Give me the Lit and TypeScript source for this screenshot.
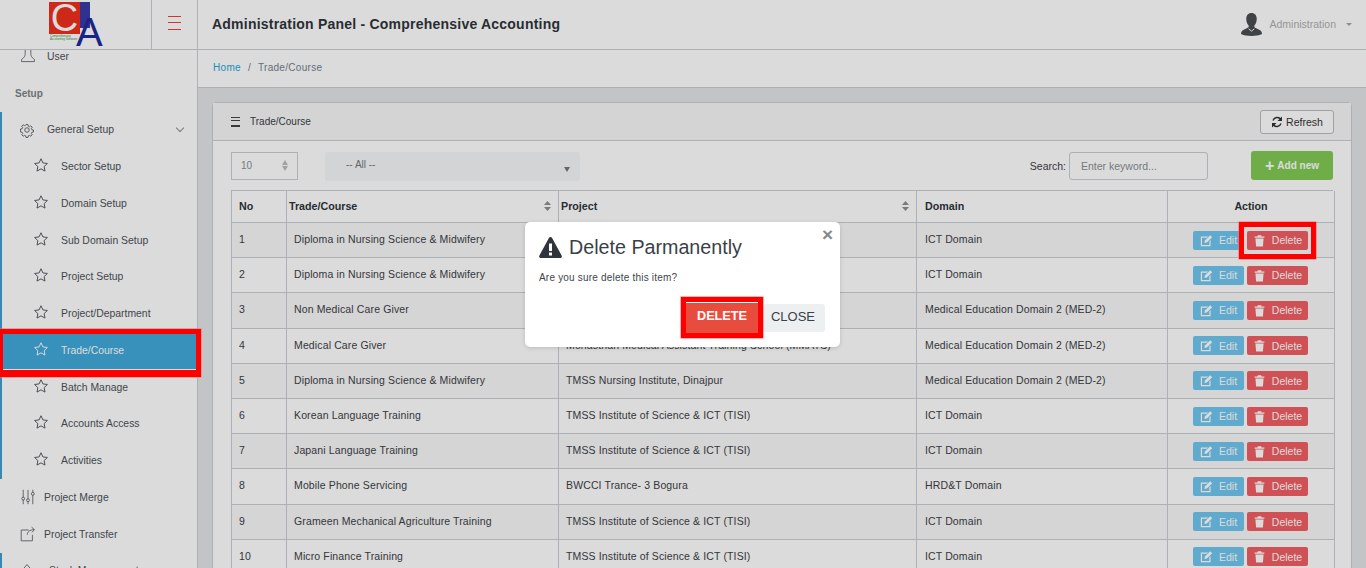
import { LitElement, html, css, svg } from 'lit';
import { customElement } from 'lit/decorators.js';

const star = svg`<path d="M10 2.200l2.400 5.200 5.600.7-4.100 3.900 1.100 5.600-5-2.800-5 2.800 1.100-5.600L2 8.100l5.600-.7z" fill="none" stroke="currentColor" stroke-width="1.200" stroke-linejoin="round"/>`;
const gear = svg`<circle cx="10" cy="10" r="2.800" fill="none" stroke="currentColor" stroke-width="1.100"/><path d="M8.600 2.500h2.800l.4 2.200 1.500.7 1.900-1.200 2 2-1.200 1.900.7 1.500 2.200.4v2.800l-2.200.4-.7 1.500 1.200 1.900-2 2-1.900-1.200-1.500.7-.4 2.200H8.600l-.4-2.200-1.500-.7-1.900 1.200-2-2 1.200-1.900-.7-1.500-2.200-.4V8.600l2.200-.4.7-1.500L2.600 4.800l2-2 1.900 1.200 1.500-.7z" fill="none" stroke="currentColor" stroke-width="1.200" stroke-linejoin="round" transform="translate(1 1) scale(.9)"/>`;
const user = svg`<path d="M6.500 2v4.500c0 2-.5 4-1.500 5L2 14.500V17h16v-2.500l-3-3c-1-1-1.500-3-1.500-5V2" fill="none" stroke="currentColor" stroke-width="1"/>`;
const sliders = svg`<path d="M4 1v18M10 1v18M16 1v18" stroke="currentColor" stroke-width="1"/><circle cx="4" cy="12" r="1.800" fill="#fff" stroke="currentColor"/><circle cx="10" cy="14" r="1.800" fill="#fff" stroke="currentColor"/><circle cx="16" cy="6" r="1.800" fill="#fff" stroke="currentColor"/>`;
const share = svg`<path d="M11 5H1.500v13.500h14V11M9 11c.5-4 3-6 8.500-6.500M14.500 1.500l3.500 3-3 3.500" fill="none" stroke="currentColor" stroke-width="1"/>`;
const house = svg`<path d="M10 2L3 10h3v6h8v-6h3z" fill="none" stroke="currentColor" stroke-width="1"/>`;
const editIcon = svg`<path d="M1 3h9L8.500 4.500H2.500v9h9V9L13 7.500V15H1z" fill="currentColor"/><path d="M6 8l6.500-6.500 2.500 2.500L8.500 10.500 5.500 11z" fill="currentColor"/>`;
const trashIcon = svg`<path d="M2 3h3.300l.7-1.500h4l.7 1.500H14v1.500H2zM3 5.500h10L12.200 15.500H3.800z" fill="currentColor"/>`;
const sortIcon = html`<svg width="7" height="10" viewBox="0 0 7 10"><path d="M3.500 0L7 4H0zM3.500 10L0 6h7z" fill="#8f8f8f"/></svg>`;

const ic = (p: unknown, size = 16, box = 20) => html`<svg width=${size} height=${size} viewBox="0 0 ${box} ${box}">${p}</svg>`;

const subs = ['Sector Setup', 'Domain Setup', 'Sub Domain Setup', 'Project Setup', 'Project/Department', 'Trade/Course', 'Batch Manage', 'Accounts Access', 'Activities'];

const rows = [
  ['Diploma in Nursing Science & Midwifery', 'TMSS Nursing Institute, Bogura', 'ICT Domain'],
  ['Diploma in Nursing Science & Midwifery', 'TMSS Nursing Institute, Rangpur', 'ICT Domain'],
  ['Non Medical Care Giver', 'Mohasthan Medical Assistant Training School', 'Medical Education Domain 2 (MED-2)'],
  ['Medical Care Giver', 'Mohasthan Medical Assistant Training School (MMATS)', 'Medical Education Domain 2 (MED-2)'],
  ['Diploma in Nursing Science & Midwifery', 'TMSS Nursing Institute, Dinajpur', 'Medical Education Domain 2 (MED-2)'],
  ['Korean Language Training', 'TMSS Institute of Science & ICT (TISI)', 'ICT Domain'],
  ['Japani Language Training', 'TMSS Institute of Science & ICT (TISI)', 'ICT Domain'],
  ['Mobile Phone Servicing', 'BWCCI Trance- 3 Bogura', 'HRD&T Domain'],
  ['Grameen Mechanical Agriculture Training', 'TMSS Institute of Science & ICT (TISI)', 'ICT Domain'],
  ['Micro Finance Training', 'TMSS Institute of Science & ICT (TISI)', 'ICT Domain'],
];

@customElement('app-root')
export class AppRoot extends LitElement {
  static styles = css`
    :host { display: block; height: 568px; overflow: hidden; position: relative; font-family: 'Liberation Sans', Arial, sans-serif; color: #3d4146; background: #e4e5e6; }
    * { box-sizing: border-box; }

    .top { height: 50px; display: flex; align-items: stretch; background: #fff; border-bottom: 1px solid #c8ced3; }
    .brand { width: 152px; border-right: 1px solid #c8ced3; position: relative; }
    .toggle { width: 46px; border-right: 1px solid #c8ced3; display: flex; align-items: center; justify-content: center; }
    .toggle span { display: block; width: 13px; border-top: 1px solid #f0402f; border-bottom: 1px solid #f0402f; height: 14px; position: relative; margin-top: -3px; }
    .toggle span::after { content: ''; position: absolute; left: 0; right: 0; top: 5px; border-top: 1px solid #f0402f; }
    .title { flex: 1; padding-left: 14px; font-size: 14px; font-weight: bold; letter-spacing: 0.22px; line-height: 48px; color: #2f353a; }
    .account { display: flex; align-items: center; padding-right: 14px; font-size: 10.500px; color: #b0b0b0; gap: 7px; }
    .account .name { margin-top: -2px; }
    .caret { border: 3px solid transparent; border-top: 3px solid #a8a8a8; margin: 3px 0 0 3px; }

    .logo-c { position: absolute; left: 49px; top: 2px; width: 31px; height: 32px; background: #f0301c; color: #fff; font-size: 38px; line-height: 33px; text-align: center; }
    .logo-b { position: absolute; left: 80px; top: 2px; width: 10px; height: 26px; background: #3a3aa8; }
    .logo-a { position: absolute; left: 76px; top: 14px; font-size: 40px; line-height: 36px; color: #1d2a9c; }
    .logo-t { position: absolute; left: 50px; top: 35px; font-size: 3px; line-height: 3px; color: #2a9a3a; }

    .main { display: flex; height: 518px; }
    .side { width: 198px; flex: none; background: #fff; overflow: hidden; border-right: 1px solid #c8ced3; font-size: 10.400px; color: #4d5258; }
    .menu { margin-top: -12px; }
    .item { height: 36.750px; display: flex; align-items: center; padding-left: 20px; gap: 11px; }
    .item svg { flex: none; color: #51565c; }
    .label { height: 36.800px; display: flex; align-items: center; padding-left: 15px; font-weight: bold; color: #7d8388; font-size: 10px; }
    .group { border-left: 2px solid #3e9fd0; }
    .group > .item { padding-left: 17px; gap: 12px; }
    .group > .sub { padding-left: 31px; gap: 12px; }
    .sub svg { margin-top: -3px; }
    .sub.active { background: #40a9d9; color: #fff; }
    .sub.active svg { color: #fff; }
    .chev { margin-left: auto; margin-right: 14px; width: 6px; height: 6px; border-right: 1px solid #8a8f93; border-bottom: 1px solid #8a8f93; transform: rotate(45deg); margin-top: -3px; }

    .content { flex: 1; min-width: 0; }
    .crumb { height: 38px; background: #fff; border-bottom: 1px solid #c8ced3; padding-left: 15px; font-size: 10px; line-height: 36px; color: #73818f; letter-spacing: 0.3px; }
    .crumb a { color: #20a8d8; }
    .crumb i { font-style: normal; margin: 0 7px; }

    .card { margin: 14px 14px 0 14px; background: #fff; border: 1px solid #c8ced3; border-radius: 4px 4px 0 0; height: 500px; }
    .card-h { height: 38px; background: #f7f7f7; border-bottom: 1px solid #c8ced3; display: flex; align-items: center; padding: 0 17px 0 18px; font-size: 10px; gap: 10px; }
    .bars { width: 9px; height: 10px; border-top: 1px solid #444; border-bottom: 1px solid #444; position: relative; }
    .bars::after { content: ''; position: absolute; left: 0; right: 0; top: 2px; height: 4px; border-top: 1px solid #444; border-bottom: 1px solid #444; }
    .refresh { margin-left: auto; width: 74px; height: 24px; border: 1px solid #b8bcc0; border-radius: 3px; background: #fff; display: flex; align-items: center; justify-content: center; gap: 3px; font-size: 10.500px; color: #333; }

    .tools { display: flex; align-items: center; height: 49px; padding: 0 18px; }
    .len { width: 67px; height: 28px; border: 1px solid #c8ced3; font-size: 10px; color: #8a8f93; padding: 0 9px; display: flex; align-items: center; justify-content: space-between; }
    .updown { display: flex; flex-direction: column; gap: 1px; }
    .updown b { display: block; border: 3.500px solid transparent; }
    .updown b:first-child { border-top: 0; border-bottom: 5px solid #bdbdbd; }
    .updown b:last-child { border-bottom: 0; border-top: 5px solid #bdbdbd; }
    .pick { width: 255px; height: 29px; margin: 2px 0 0 27px; background: #f5f7f9; border-radius: 3px; font-size: 10px; color: #777; padding: 7px 21px; position: relative; }
    .pick::after { content: ''; position: absolute; right: 10px; top: 15px; border: 3.500px solid transparent; border-top: 5px solid #777; }
    .search { margin-left: auto; font-size: 10.500px; color: #3d4146; display: flex; align-items: center; gap: 3px; }
    .search span { width: 139px; height: 28px; background: #fff; border: 1px solid #c8ced3; border-radius: 3px; display: flex; align-items: center; padding-left: 11px; color: #8a8f93; font-size: 10.500px; }
    .add { margin-left: 43px; width: 82px; height: 29px; background: #82ca54; color: #fff; border-radius: 3px; display: flex; align-items: center; justify-content: center; font-size: 10px; font-weight: bold; gap: 3px; }
    .add b { font-size: 16px; line-height: 14px; }

    .tbl { margin: 0 18px; display: grid; grid-template-columns: 55px 272px 358px 251px 167px; border-left: 1px solid #c8ced3; border-top: 1px solid #c8ced3; font-size: 10.500px; letter-spacing: 0.13px; }
    .c { border-right: 1px solid #c8ced3; border-bottom: 1px solid #c8ced3; padding: 0 7px; height: 35.200px; line-height: 32px; white-space: nowrap; overflow: hidden; color: #3d4146; }
    .c.d { padding-left: 8px; }
    .c.h { height: 32px; line-height: 30px; font-weight: bold; color: #2f353a; font-size: 10.700px; letter-spacing: 0; display: flex; justify-content: space-between; align-items: center; padding-bottom: 2px; }
    .c.h.sort { padding: 0 7px 2px 2px; }
    .c.h.act { justify-content: center; }
    .c.odd { background: #f8f8f9; }
    .acts { display: flex; justify-content: flex-end; align-items: center; gap: 3px; height: 100%; padding-right: 26px; }
    .btn { height: 19px; border-radius: 2px; color: #fff; display: flex; align-items: center; justify-content: center; gap: 6px; font-size: 10.500px; letter-spacing: 0; }
    .btn.edit { width: 51px; background: #70c6f0; }
    .btn.del { width: 61px; background: #f25f65; }

    .backdrop { position: absolute; inset: 0; background: rgba(0,0,0,.14); }
    .modal { position: absolute; left: 525px; top: 222px; width: 315px; height: 125px; background: #fff; border-radius: 5px; box-shadow: 0 1px 4px rgba(0,0,0,.15); padding: 13px 15px 0 14px; }
    .m-title { display: flex; align-items: center; gap: 7px; font-size: 19.700px; line-height: 24px; color: #3a3f48; }
    .m-x { position: absolute; right: 7px; top: 5px; font-size: 19px; line-height: 16px; color: #888; font-weight: bold; }
    .m-body { font-size: 10px; margin-top: 13px; letter-spacing: 0.2px; color: #40454d; }
    .m-btns { display: flex; justify-content: flex-end; margin-top: 20px; gap: 5px; align-items: flex-start; }
    .m-del { width: 72px; height: 30px; background: #e84c3d; color: #fff; font-weight: bold; font-size: 12.700px; display: flex; align-items: center; justify-content: center; padding-bottom: 4px; }
    .m-close { width: 62px; height: 28px; margin-top: 1px; background: #ecf0f1; border-radius: 3px; font-size: 13px; color: #3a3f48; display: flex; align-items: center; justify-content: center; padding: 0 2px 4px 0; }

    .mark { position: absolute; border: 5px solid #ff0000; box-shadow: 0 0 0 0.500px #ff6666; }
    .mark.nav { border-bottom-width: 7px; }
  `;

  render() {
    return html`
      <div class="top">
        <div class="brand">
          <div class="logo-c">C</div><div class="logo-b"></div><div class="logo-a">A</div>
          <div class="logo-t">Comprehensive<br>Accounting Software</div>
        </div>
        <div class="toggle"><span></span></div>
        <div class="title">Administration Panel - Comprehensive Accounting</div>
        <div class="account">
          <svg width="21" height="23" viewBox="0 0 22 24"><path d="M11 0c3.500 0 5.500 2.500 5.500 6 0 3-1 5.500-2.500 7v2l6 3c1.500 1 2 2.500 2 4-3 1.500-7 2-11 2s-8-.5-11-2c0-1.500.5-3 2-4l6-3v-2C6.500 11.500 5.500 9 5.500 6 5.500 2.500 7.500 0 11 0z" fill="#4a4e52"/><path d="M8 16.500l3 2.500 3-2.500" fill="none" stroke="#fff" stroke-width="1"/></svg>
          <span class="name">Administration</span><span class="caret"></span>
        </div>
      </div>
      <div class="main">
        <div class="side">
          <div class="menu">
            <div class="item">${ic(user)}<span>User</span></div>
            <div class="label">Setup</div>
            <div class="group">
              <div class="item">${ic(gear)}<span>General Setup</span><span class="chev"></span></div>
              ${subs.map((s) => html`<div class="item sub ${s === 'Trade/Course' ? 'active' : ''}">${ic(star)}<span>${s}</span></div>`)}
            </div>
            <div class="item" style="gap:8px">${ic(sliders)}<span>Project Merge</span></div>
            <div class="item" style="gap:8px">${ic(share)}<span>Project Transfer</span></div>
            <div class="group"><div class="item" style="gap:14px">${ic(house)}<span>Stock Management</span></div></div>
          </div>
        </div>
        <div class="content">
          <div class="crumb"><a>Home</a><i>/</i>Trade/Course</div>
          <div class="card">
            <div class="card-h">
              <span class="bars"></span><span>Trade/Course</span>
              <span class="refresh">
                <svg width="12" height="12" viewBox="0 0 12 12"><path d="M10 3.500A4.500 4.500 0 0 0 2 4.500M2 8.500A4.500 4.500 0 0 0 10 7.500" fill="none" stroke="#333" stroke-width="1.400"/><path d="M11 .5V5H6.500zM1 11.500V7h4.500z" fill="#333"/></svg>
                Refresh
              </span>
            </div>
            <div class="tools">
              <div class="len"><span>10</span><span class="updown"><b></b><b></b></span></div>
              <div class="pick">-- All --</div>
              <div class="search">Search: <span>Enter keyword...</span></div>
              <div class="add"><b>+</b>Add new</div>
            </div>
            <div class="tbl">
              <div class="c h">No</div>
              <div class="c h sort"><span>Trade/Course</span>${sortIcon}</div>
              <div class="c h sort"><span>Project</span>${sortIcon}</div>
              <div class="c h d">Domain</div>
              <div class="c h act">Action</div>
              ${rows.map((r, i) => {
                const odd = i % 2 === 0 ? 'odd' : '';
                return html`
                  <div class="c ${odd}">${i + 1}</div>
                  <div class="c ${odd}">${r[0]}</div>
                  <div class="c ${odd}">${r[1]}</div>
                  <div class="c d ${odd}">${r[2]}</div>
                  <div class="c ${odd}" style="padding:0">
                    <div class="acts">
                      <span class="btn edit">${ic(editIcon, 13, 16)}Edit</span>
                      <span class="btn del">${ic(trashIcon, 13, 16)}Delete</span>
                    </div>
                  </div>`;
              })}
            </div>
          </div>
        </div>
      </div>
      <div class="backdrop"></div>
      <div class="modal">
        <div class="m-title">
          <svg width="23" height="21" viewBox="0 0 23 21"><path d="M11.500 0c.7 0 1.200.4 1.600 1l9.500 17.500c.7 1.200 0 2.500-1.500 2.500H1.900C.4 21-.3 19.700.4 18.500L9.900 1c.4-.6.9-1 1.600-1z" fill="#30343c"/><rect x="10" y="6.500" width="3" height="7.500" fill="#fff"/><rect x="10" y="15.500" width="3" height="3" fill="#fff"/></svg>
          Delete Parmanently
        </div>
        <span class="m-x">×</span>
        <div class="m-body">Are you sure delete this item?</div>
        <div class="m-btns"><span class="m-del">DELETE</span><span class="m-close">CLOSE</span></div>
      </div>
      <div class="mark nav" style="left:-2px;top:329px;width:203px;height:48px"></div>
      <div class="mark" style="left:1239px;top:222px;width:77px;height:37px"></div>
      <div class="mark" style="left:681px;top:297px;width:82px;height:41px"></div>
    `;
  }
}
